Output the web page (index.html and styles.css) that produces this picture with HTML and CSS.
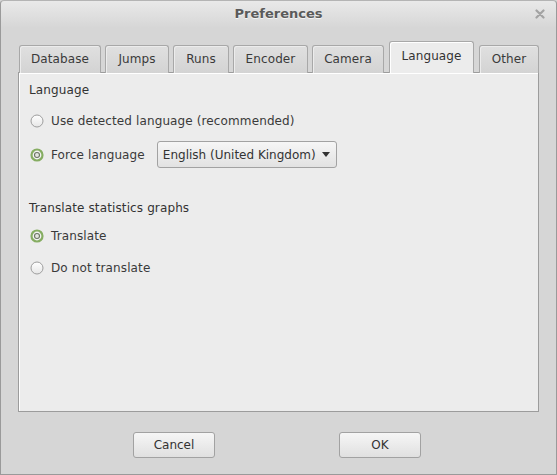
FILE: index.html
```html
<!DOCTYPE html>
<html>
<head>
<meta charset="utf-8">
<link rel="stylesheet" href="styles.css">
</head>
<body>
<div class="window">
  <div class="titlebar">
    <span></span>
    <span class="title">Preferences</span>
    <span class="close">
      <svg width="10" height="10" viewBox="0 0 10 10"><path d="M1.5 1.5 L8.5 8.5 M8.5 1.5 L1.5 8.5" stroke="#a3a3a3" stroke-width="2.2" stroke-linecap="round"/></svg>
    </span>
  </div>
  <div class="notebook">
    <div class="tabs">
      <div class="tab t-db">Database</div>
      <div class="tab t-jumps">Jumps</div>
      <div class="tab t-runs">Runs</div>
      <div class="tab t-enc">Encoder</div>
      <div class="tab t-cam">Camera</div>
      <div class="tab t-lang active">Language</div>
      <div class="tab t-other">Other</div>
    </div>
    <div class="panel">
      <div class="section">Language</div>
      <div class="row r1">
        <svg class="radio" width="14" height="14" viewBox="0 0 14 14"><defs><linearGradient id="g1" x1="0" y1="0" x2="0" y2="1"><stop offset="0" stop-color="#ffffff"/><stop offset="1" stop-color="#e6e6e6"/></linearGradient></defs><circle cx="7" cy="7" r="6" fill="url(#g1)" stroke="#9e9e9e" stroke-width="1"/></svg>
        <span>Use detected language (recommended)</span>
      </div>
      <div class="row r2">
        <svg class="radio" width="14" height="14" viewBox="0 0 14 14"><circle cx="7" cy="7" r="5.5" fill="#f2f2f2" stroke="#86ad62" stroke-width="2.2"/><circle cx="7" cy="7" r="2.5" fill="#e4e7df" stroke="#6c7564" stroke-width="1.1"/></svg>
        <span>Force language</span>
        <div class="combo">
          <span>English (United Kingdom)</span>
          <svg width="8" height="5" viewBox="0 0 8 5"><path d="M0 0 L8 0 L4 5 Z" fill="#333"/></svg>
        </div>
      </div>
      <div class="section s2">Translate statistics graphs</div>
      <div class="row r3">
        <svg class="radio" width="14" height="14" viewBox="0 0 14 14"><circle cx="7" cy="7" r="5.5" fill="#f2f2f2" stroke="#86ad62" stroke-width="2.2"/><circle cx="7" cy="7" r="2.5" fill="#e4e7df" stroke="#6c7564" stroke-width="1.1"/></svg>
        <span>Translate</span>
      </div>
      <div class="row r4">
        <svg class="radio" width="14" height="14" viewBox="0 0 14 14"><defs><linearGradient id="g2" x1="0" y1="0" x2="0" y2="1"><stop offset="0" stop-color="#ffffff"/><stop offset="1" stop-color="#e6e6e6"/></linearGradient></defs><circle cx="7" cy="7" r="6" fill="url(#g2)" stroke="#9e9e9e" stroke-width="1"/></svg>
        <span>Do not translate</span>
      </div>
    </div>
  </div>
  <div class="buttons">
    <div class="btn">Cancel</div>
    <div class="btn">OK</div>
  </div>
</div>
</body>
</html>
```
FILE: styles.css
```css
html, body {
  margin: 0;
  padding: 0;
  background: #d6d6d6;
}
body {
  font-family: "DejaVu Sans", sans-serif;
  font-size: 12px;
  color: #3a3a3a;
}
.window {
  width: 557px;
  height: 475px;
  box-sizing: border-box;
  border: 1px solid #9a9a9a;
  border-top-color: #b4b4b4;
  border-radius: 4px 4px 0 0;
  background: #d6d6d6;
  display: flex;
  flex-direction: column;
}
.titlebar {
  height: 27px;
  display: grid;
  grid-template-columns: 1fr auto 1fr;
  align-items: center;
  background: linear-gradient(#e9e9e9, #d6d6d6);
  border-radius: 4px 4px 0 0;
}
.title {
  font-weight: bold;
  font-size: 13px;
  color: #5a5a5a;
  text-shadow: 0 1px 0 #f4f4f4;
  margin-top: -2px;
}
.close {
  justify-self: end;
  margin-right: 11px;
  margin-top: -2px;
  display: flex;
}
.notebook {
  margin: 14px 17px 0 17px;
}
.tabs {
  display: flex;
  align-items: flex-end;
  gap: 4px;
  padding-left: 1px;
  height: 31px;
  position: relative;
  z-index: 1;
  margin-bottom: -1px;
}
.tab {
  box-sizing: border-box;
  height: 28px;
  line-height: 27px;
  text-align: center;
  border: 1px solid #a8a8a8;
  border-bottom: none;
  border-radius: 3px 3px 0 0;
  background: linear-gradient(#e0e0e0, #d3d3d3);
  box-shadow: inset 1px 1px 0 #ececec;
  color: #3a3a3a;
  letter-spacing: 0.1px;
}
.t-db { width: 82px; }
.t-jumps { width: 64px; }
.t-runs { width: 56px; }
.t-enc { width: 75px; }
.t-cam { width: 72px; }
.t-lang { width: 85px; margin-left: 1px; }
.t-other { width: 60px; margin-left: 1px; }
.tab.active {
  height: 32px;
  line-height: 28px;
  background: #ececec;
  box-shadow: inset 1px 1px 0 #ffffff;
  color: #333;
}
.panel {
  height: 340px;
  box-sizing: border-box;
  border: 1px solid #9c9c9c;
  background: #ececec;
  box-shadow: inset 1px 1px 0 #ffffff;
  padding: 9px 10px 0 10px;
  letter-spacing: 0.12px;
}
.section {
  line-height: 16px;
  color: #333;
}
.section.s2 {
  margin-top: 32px;
}
.row {
  display: flex;
  align-items: center;
  height: 24px;
  padding-left: 1px;
}
.row .radio {
  margin-right: 7px;
  flex: none;
}
.r1 { margin-top: 11px; }
.r2 { margin-top: 8px; height: 27px; }
.r3 { margin-top: 8px; }
.r4 { margin-top: 8px; }
.combo {
  margin-left: 12px;
  width: 180px;
  height: 27px;
  box-sizing: border-box;
  border: 1px solid #a2a2a2;
  border-radius: 3px;
  background: linear-gradient(#f6f6f6, #e2e2e2);
  display: flex;
  align-items: center;
  justify-content: space-between;
  padding: 0 6px 0 5px;
  color: #333;
  letter-spacing: 0;
}
.buttons {
  display: flex;
  gap: 124px;
  padding-left: 132px;
  margin-top: 20px;
}
.btn {
  width: 82px;
  height: 26px;
  box-sizing: border-box;
  border: 1px solid #a2a2a2;
  border-radius: 3px;
  background: linear-gradient(#f6f6f6, #e0e0e0);
  display: flex;
  align-items: center;
  justify-content: center;
  color: #333;
}
```
